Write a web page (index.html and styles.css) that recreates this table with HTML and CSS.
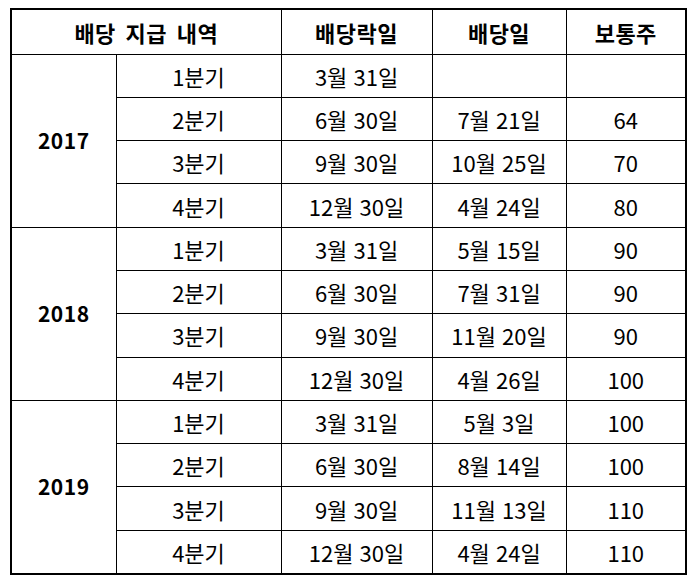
FILE: index.html
```html
<!DOCTYPE html>
<html lang="ko">
<head>
<meta charset="utf-8">
<link rel="stylesheet" href="styles.css">
</head>
<body>
<table class="div-table">
  <colgroup>
    <col class="c-year"><col class="c-q"><col class="c-ex"><col class="c-pay"><col class="c-amt">
  </colgroup>
  <thead>
    <tr class="head"><th colspan="2">배당 지급 내역</th><th>배당락일</th><th>배당일</th><th>보통주</th></tr>
  </thead>
  <tbody>
    <tr class="grp"><td rowspan="4" class="year">2017</td><td>1분기</td><td>3월 31일</td><td></td><td></td></tr>
    <tr><td>2분기</td><td>6월 30일</td><td>7월 21일</td><td>64</td></tr>
    <tr><td>3분기</td><td>9월 30일</td><td>10월 25일</td><td>70</td></tr>
    <tr><td>4분기</td><td>12월 30일</td><td>4월 24일</td><td>80</td></tr>
    <tr class="grp"><td rowspan="4" class="year">2018</td><td>1분기</td><td>3월 31일</td><td>5월 15일</td><td>90</td></tr>
    <tr><td>2분기</td><td>6월 30일</td><td>7월 31일</td><td>90</td></tr>
    <tr><td>3분기</td><td>9월 30일</td><td>11월 20일</td><td>90</td></tr>
    <tr><td>4분기</td><td>12월 30일</td><td>4월 26일</td><td>100</td></tr>
    <tr class="grp"><td rowspan="4" class="year">2019</td><td>1분기</td><td>3월 31일</td><td>5월 3일</td><td>100</td></tr>
    <tr><td>2분기</td><td>6월 30일</td><td>8월 14일</td><td>100</td></tr>
    <tr><td>3분기</td><td>9월 30일</td><td>11월 13일</td><td>110</td></tr>
    <tr><td>4분기</td><td>12월 30일</td><td>4월 24일</td><td>110</td></tr>
  </tbody>
</table>
</body>
</html>
```
FILE: styles.css
```css
html, body {
  margin: 0;
  padding: 0;
  background: #ffffff;
}
body {
  font-family: "Noto Sans CJK KR", "Noto Sans", sans-serif;
  color: #000000;
}
.div-table {
  margin: 8px 0 0 10px;
  border-collapse: collapse;
  table-layout: fixed;
  width: 675px;
  border: 2px solid #000;
}
.c-year { width: 105px; }
.c-q { width: 165px; }
.c-ex { width: 151px; }
.c-pay { width: 134px; }
.c-amt { width: 120px; }
.div-table th,
.div-table td {
  border: 1px solid #000;
  padding: 0;
  text-align: center;
  vertical-align: middle;
  font-size: 22px;
  font-weight: normal;
  line-height: 1;
  white-space: nowrap;
}
.div-table th {
  font-weight: bold;
  font-size: 22px;
  letter-spacing: 0.5px;
  word-spacing: 3px;
}
.head { height: 45px; }
.div-table tbody tr { height: 43.3px; }
.div-table td.year {
  font-weight: bold;
  font-size: 21px;
  letter-spacing: 0.5px;
}
.grp td { border-top: 1px solid #000; }
```
